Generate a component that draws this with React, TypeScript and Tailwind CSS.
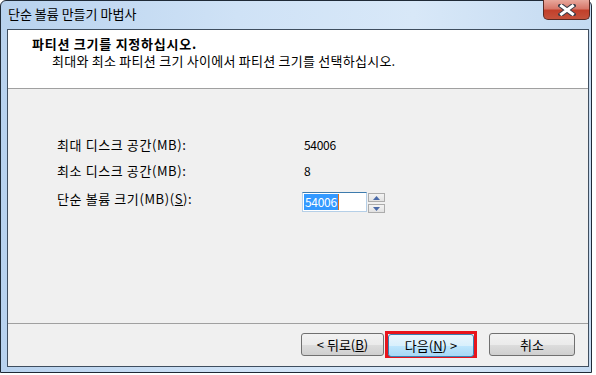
import React from "react";

const font = { fontFamily: '"Noto Sans CJK KR", "Noto Sans", sans-serif' };

function Btn({ children, w, primary }: { children: React.ReactNode; w: string; primary?: boolean }) {
  return (
    <div
      className={`${w} h-[23px] rounded-[3px] border flex items-center justify-center text-[13px] leading-[16px] text-black ${
        primary
          ? "border-[#3c7fb1] bg-[linear-gradient(#eaf6fd_0%,#d9f0fc_50%,#bee6fd_51%,#a7d9f5_100%)]"
          : "border-[#707070] bg-[linear-gradient(#f2f2f2_0%,#ebebeb_50%,#dddddd_51%,#cfcfcf_100%)]"
      }`}
    >
      {children}
    </div>
  );
}

export default function App() {
  return (
    <div className="w-[596px] h-[375px] bg-white" style={font}>
      <div className="relative w-[592px] h-[373px] rounded-t-[6px] border border-[#1f2a37] bg-[linear-gradient(to_right,#b8d2ee,#cfe2f6_40%,#d8e8f8_70%,#c4daf1)] flex flex-col pl-[6px] pr-[2px] pb-[5px]">
        <div className="h-[28px] flex items-center pl-[1px] pb-[2px]">
          <span className="text-[13px] leading-[16px] text-black">단순 볼륨 만들기 마법사</span>
        </div>
        <div className="absolute top-[-1px] right-[1px] w-[47px] h-[20px] rounded-b-[5px] border border-[#5a2a24] border-t-0 bg-[linear-gradient(#e8a89c_0%,#d7786a_45%,#c2402b_55%,#c4523c_100%)] flex items-center justify-center">
          <svg width="18" height="12" viewBox="0 0 18 12">
            <path d="M3 1.5 L15 10.5 M15 1.5 L3 10.5" stroke="#3c3c46" strokeWidth="5" strokeLinecap="square" />
            <path d="M3.5 2 L14.5 10 M14.5 2 L3.5 10" stroke="#ffffff" strokeWidth="3" strokeLinecap="square" />
          </svg>
        </div>
        <div className="flex-1 border border-[#3f4e5f] bg-[#f0f0f0] flex flex-col">
          <div className="h-[59px] bg-white border-b border-[#a0a0a0] pl-[24px] pt-[6px]">
            <div className="text-[13px] leading-[16px] font-bold text-black tracking-[0.75px]">파티션 크기를 지정하십시오.</div>
            <div className="text-[13px] leading-[16px] text-black ml-[20px] mt-[1px] tracking-[0.25px]">
              최대와 최소 파티션 크기 사이에서 파티션 크기를 선택하십시오.
            </div>
          </div>
          <div className="flex-1 pl-[49px] pt-[48px] text-[13px] leading-[16px] text-black">
            <div className="flex">
              <div className="w-[247px] tracking-[0.6px]">최대 디스크 공간(MB):</div>
              <div className="text-[12px] tracking-[-0.3px]">54006</div>
            </div>
            <div className="flex mt-[10px]">
              <div className="w-[247px] tracking-[0.6px]">최소 디스크 공간(MB):</div>
              <div className="text-[12px]">8</div>
            </div>
            <div className="flex items-start mt-[12px]">
              <div className="w-[245px] tracking-[0.6px]">
                단순 볼륨 크기(MB)(<span className="underline">S</span>):
              </div>
              <div className="flex mt-[1px]">
                <div className="w-[65px] h-[20px] border border-[#b5cfe7] border-t-[#3d7bad] bg-white pl-[1px] pt-[1px] flex items-start">
                  <span className="bg-[#3399ff] text-white text-[12px] tracking-[-0.3px] h-[16px] leading-[16px] px-[1px] border-r border-[#e0701a]">54006</span>
                </div>
                <div className="ml-[1px] flex flex-col gap-[2px] pt-[1px]">
                  <div className="w-[17px] h-[9px] border border-[#acacac] bg-[linear-gradient(#f4f4f4,#e2e2e2)] flex items-center justify-center">
                    <svg width="7" height="4" viewBox="0 0 7 4"><path d="M3.5 0 L7 4 L0 4 Z" fill="#4a6aa8" /></svg>
                  </div>
                  <div className="w-[17px] h-[9px] border border-[#acacac] bg-[linear-gradient(#f4f4f4,#e2e2e2)] flex items-center justify-center">
                    <svg width="7" height="4" viewBox="0 0 7 4"><path d="M0 0 L7 0 L3.5 4 Z" fill="#4a6aa8" /></svg>
                  </div>
                </div>
              </div>
            </div>
          </div>
          <div className="h-[43px] border-t border-[#a0a0a0] flex items-center justify-end pr-[13px] pb-[1px]">
            <Btn w="w-[83px]">
              &lt; 뒤로(<span className="underline">B</span>)
            </Btn>
            <div className="ml-[1px] w-[92px] h-[27px] border-[3px] border-[#e8141c] flex">
              <Btn w="w-[86px]" primary>
                다음(<span className="underline">N</span>) &gt;
              </Btn>
            </div>
            <div className="ml-[12px]">
              <Btn w="w-[86px]">취소</Btn>
            </div>
          </div>
        </div>
      </div>
    </div>
  );
}
